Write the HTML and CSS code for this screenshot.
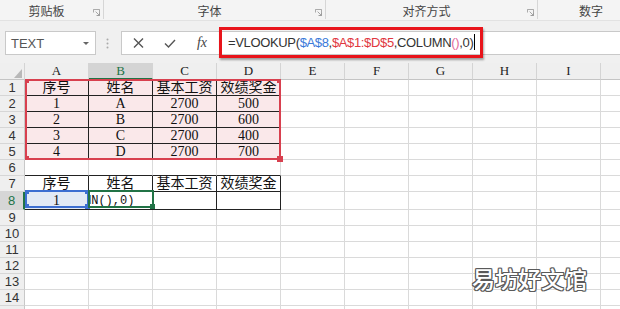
FILE: index.html
```html
<!DOCTYPE html>
<html lang="zh-CN">
<head>
  <meta charset="UTF-8">
  <title>VLOOKUP 与 COLUMN</title>
  <link rel="stylesheet" href="styles.css">
</head>
<body>

  <!-- 功能区分组标题 -->
  <div class="ribbon">
    <div class="grupo g1">
      <span class="rotulo">剪贴板</span>
      <svg class="lanc" viewBox="0 0 8 8"><path d="M0.5 4V0.5H7.5V7.5H4" /><path d="M3 3L7 7M7.5 4.5V7.5H4.5" /></svg>
    </div>
    <div class="grupo g2">
      <span class="rotulo">字体</span>
      <svg class="lanc" viewBox="0 0 8 8"><path d="M0.5 4V0.5H7.5V7.5H4" /><path d="M3 3L7 7M7.5 4.5V7.5H4.5" /></svg>
    </div>
    <div class="grupo g3">
      <span class="rotulo">对齐方式</span>
      <svg class="lanc" viewBox="0 0 8 8"><path d="M0.5 4V0.5H7.5V7.5H4" /><path d="M3 3L7 7M7.5 4.5V7.5H4.5" /></svg>
    </div>
    <div class="grupo g4">
      <span class="rotulo">数字</span>
    </div>
  </div>

  <!-- 编辑栏：名称框 + 公式 -->
  <div class="barra">
    <div class="nome">
      <span>TEXT</span>
      <span class="seta"></span>
    </div>
    <svg class="pontos" viewBox="0 0 3 11"><circle cx="1.5" cy="1.5" r="1" /><circle cx="1.5" cy="5.5" r="1" /><circle cx="1.5" cy="9.5" r="1" /></svg>
    <div class="campo">
      <span class="btn">
        <svg width="11" height="10" viewBox="0 0 11 10"><path d="M1 0.5L10 9.5M10 0.5L1 9.5" /></svg>
      </span>
      <span class="btn">
        <svg width="12" height="9" viewBox="0 0 12 9"><path d="M1 4.5L4.5 8L11 1" /></svg>
      </span>
      <span class="btn fx">fx</span>
      <div class="formula">
        <span>=VLOOKUP(</span><span class="azul">$A$8</span><span>,</span><span class="vermelho">$A$1:$D$5</span><span>,COLUMN</span><span class="rosa-txt">()</span><span>,0)</span><span class="cursor"></span>
      </div>
    </div>
  </div>

  <!-- 工作表 -->
  <div class="planilha">
    <table class="grade">
      <colgroup>
        <col class="c-num">
        <col><col><col><col><col><col><col><col><col><col>
      </colgroup>
      <tr class="cab">
        <th class="canto"><svg width="8" height="9" viewBox="0 0 8 9"><polygon points="8,0 8,9 0,9" /></svg></th>
        <th>A</th><th class="sel-col">B</th><th>C</th><th>D</th><th>E</th><th>F</th><th>G</th><th>H</th><th>I</th><th></th>
      </tr>
      <tr>
        <th>1</th>
        <td class="rosa pr pb">序号</td><td class="rosa pr pb">姓名</td><td class="rosa pr pb">基本工资</td><td class="rosa pb">效绩奖金</td>
        <td></td><td></td><td></td><td></td><td></td><td></td>
      </tr>
      <tr>
        <th>2</th>
        <td class="rosa pr pb">1</td><td class="rosa pr pb">A</td><td class="rosa pr pb num">2700</td><td class="rosa pb num">500</td>
        <td></td><td></td><td></td><td></td><td></td><td></td>
      </tr>
      <tr>
        <th>3</th>
        <td class="rosa pr pb">2</td><td class="rosa pr pb">B</td><td class="rosa pr pb num">2700</td><td class="rosa pb num">600</td>
        <td></td><td></td><td></td><td></td><td></td><td></td>
      </tr>
      <tr>
        <th>4</th>
        <td class="rosa pr pb">3</td><td class="rosa pr pb">C</td><td class="rosa pr pb num">2700</td><td class="rosa pb num">400</td>
        <td></td><td></td><td></td><td></td><td></td><td></td>
      </tr>
      <tr>
        <th>5</th>
        <td class="rosa pr">4</td><td class="rosa pr">D</td><td class="rosa pr num">2700</td><td class="rosa num">700</td>
        <td></td><td></td><td></td><td></td><td></td><td></td>
      </tr>
      <tr>
        <th>6</th>
        <td class="pb"></td><td class="pb"></td><td class="pb"></td><td class="pb"></td>
        <td></td><td></td><td></td><td></td><td></td><td></td>
      </tr>
      <tr>
        <th>7</th>
        <td class="pr pb">序号</td><td class="pr pb">姓名</td><td class="pr pb">基本工资</td><td class="pr pb">效绩奖金</td>
        <td></td><td></td><td></td><td></td><td></td><td></td>
      </tr>
      <tr>
        <th class="sel-lin">8</th>
        <td class="pr pb azul-claro">1</td><td class="pr pb editando"><span>MN(),0)</span></td><td class="pr pb"></td><td class="pr pb"></td>
        <td></td><td></td><td></td><td></td><td></td><td></td>
      </tr>
      <tr><th>9</th><td></td><td></td><td></td><td></td><td></td><td></td><td></td><td></td><td></td><td></td></tr>
      <tr><th>10</th><td></td><td></td><td></td><td></td><td></td><td></td><td></td><td></td><td></td><td></td></tr>
      <tr><th>11</th><td></td><td></td><td></td><td></td><td></td><td></td><td></td><td></td><td></td><td></td></tr>
      <tr><th>12</th><td></td><td></td><td></td><td></td><td></td><td></td><td></td><td></td><td></td><td></td></tr>
      <tr><th>13</th><td></td><td></td><td></td><td></td><td></td><td></td><td></td><td></td><td></td><td></td></tr>
      <tr><th>14</th><td></td><td></td><td></td><td></td><td></td><td></td><td></td><td></td><td></td><td></td></tr>
      <tr><th>15</th><td></td><td></td><td></td><td></td><td></td><td></td><td></td><td></td><td></td><td></td></tr>
    </table>

    <!-- 公式引用的区域（覆盖在单元格上） -->
    <div class="ref-vermelha">
      <span class="ponto tl"></span><span class="ponto tr"></span><span class="ponto bl"></span><span class="ponto br grande"></span>
    </div>
    <div class="ref-azul">
      <span class="ponto tl"></span><span class="ponto tr"></span><span class="ponto bl"></span><span class="ponto br"></span>
    </div>
    <div class="ativa"><span class="ponto br"></span></div>

    <div class="marca">易坊好文馆</div>
  </div>

</body>
</html>
```

FILE: styles.css
```css
body {
  margin: 0;
  width: 620px;
  height: 309px;
  overflow: hidden;
  background: #fff;
  font-family: "Liberation Sans", "Noto Sans CJK SC", sans-serif;
}

/* 功能区分组标题 */
.ribbon {
  display: flex;
  height: 20px;
  background: #f4f4f4;
  border-bottom: 1px solid #e2e2e2;
  font-size: 12px;
  color: #444;
}

.grupo {
  display: flex;
  align-items: center;
  flex: none;
  height: 18px;
  padding-top: 1px;
  border-right: 1px solid #d6d6d6;
}

.grupo .rotulo {
  flex: 1;
  text-align: center;
}

.g1 { width: 103px; }
.g2 { width: 221px; }
.g3 { width: 211px; }
.g4 { width: 106px; border-right: none; }

.lanc {
  width: 7px;
  height: 7px;
  margin: 5px 3px 0 0;
  fill: none;
  stroke: #9a9a9a;
  stroke-width: 1;
}

/* 编辑栏 */
.barra {
  display: flex;
  align-items: center;
  height: 42px;
  background: #f0f0f0;
}

.nome {
  display: flex;
  align-items: center;
  justify-content: space-between;
  box-sizing: border-box;
  width: 91px;
  height: 24px;
  margin: 2px 0 0 5px;
  padding: 0 6px 0 5px;
  background: #fff;
  border: 1px solid #c9c9c9;
  font-size: 13px;
  color: #555;
}

.seta {
  width: 0;
  height: 0;
  border-left: 3px solid transparent;
  border-right: 3px solid transparent;
  border-top: 3px solid #666;
}

.pontos {
  width: 3px;
  height: 11px;
  margin: 2px 0 0 10px;
  fill: #aaa;
}

.campo {
  display: flex;
  align-items: center;
  flex: 1;
  box-sizing: border-box;
  height: 24px;
  margin: 2px -10px 0 12px;
  background: #fff;
  border: 1px solid #c9c9c9;
}

.btn {
  display: flex;
  align-items: center;
  justify-content: center;
  width: 32px;
  height: 22px;
}

.btn svg {
  fill: none;
  stroke: #555;
  stroke-width: 1.4;
}

.btn.fx {
  font-family: "Liberation Serif", serif;
  font-style: italic;
  font-size: 14px;
  color: #444;
}

/* 红框里的公式 */
.formula {
  display: flex;
  align-items: center;
  flex: none;
  box-sizing: border-box;
  width: 264px;
  height: 31px;
  margin: -2px 0 0 1px;
  padding-left: 6px;
  border: 3px solid #e8141b;
  box-shadow: 1px 2px 2px rgba(0, 0, 0, 0.35);
  font-size: 13px;
  letter-spacing: -0.35px;
  color: #333;
  white-space: nowrap;
}

.azul { color: #3b7ad9; }
.vermelho { color: #e0373e; }
.rosa-txt { color: #e36a9c; }

.cursor {
  display: inline-block;
  width: 1px;
  height: 16px;
  margin-left: 1px;
  background: #000;
}

/* 工作表 */
.planilha {
  position: relative;
}

.grade {
  table-layout: fixed;
  width: 665px;
  border-collapse: separate;
  border-spacing: 0;
}

.grade col { width: 64px; }
.grade col.c-num { width: 25px; }

.grade tr { height: 16px; }

.grade td,
.grade th {
  padding: 0;
  line-height: 15px;
  text-align: center;
  white-space: nowrap;
  overflow: hidden;
  border-right: 1px solid #dadada;
  border-bottom: 1px solid #dadada;
}

.grade td {
  font-family: "Liberation Serif", "Noto Sans CJK SC", serif;
  font-size: 14px;
  color: #111;
}

/* 行号 */
.grade th {
  background: #efefef;
  font-weight: normal;
  font-size: 13px;
  color: #333;
  border-right-color: #c8c8c8;
  border-bottom-color: #d6d6d6;
}

/* 列标 */
.cab { height: 17px; }

.cab th {
  line-height: 16px;
  font-family: "Liberation Serif", serif;
  font-size: 13px;
  color: #222;
  border-right-color: #d4d4d4;
  border-bottom-color: #c4c4c4;
}

.canto svg {
  display: block;
  margin: 4px 0 0 14px;
  fill: #b8b8b8;
}

.cab th.sel-col {
  line-height: 15px;
  background: #d4d4d4;
  color: #217346;
  border-bottom: 2px solid #217346;
}

.grade th.sel-lin {
  background: #d6d6d6;
  color: #217346;
  border-right: 2px solid #217346;
}

.rosa { background: #fae8ea; }
.pr { border-right-color: #222 !important; }
.pb { border-bottom-color: #222 !important; }
.num { font-family: "Liberation Sans", sans-serif; font-size: 13px; }

.azul-claro { background: #e3eaf5; }

.editando {
  text-align: left !important;
}

.editando span {
  margin-left: -5px;
  font-family: "Liberation Mono", monospace;
  font-size: 12px;
}

/* 引用框 */
.ref-vermelha,
.ref-azul,
.ativa {
  position: absolute;
  box-sizing: border-box;
}

.ref-vermelha {
  left: 25px;
  top: 16px;
  width: 256px;
  height: 81px;
  border: 2px solid #d8404f;
}

.ref-azul {
  left: 25px;
  top: 127px;
  width: 64px;
  height: 18px;
  border: 2px solid #3d6fd1;
}

.ativa {
  left: 88px;
  top: 127px;
  width: 66px;
  height: 18px;
  border: 2px solid #217346;
}

.ponto {
  position: absolute;
  width: 4px;
  height: 4px;
}

.ref-vermelha .ponto { background: #d8404f; }
.ref-azul .ponto { background: #3d6fd1; }
.ativa .ponto { background: #217346; }

.ponto.tl { left: -2px; top: -2px; }
.ponto.tr { right: -2px; top: -2px; }
.ponto.bl { left: -2px; bottom: -2px; }
.ponto.br { right: -3px; bottom: -3px; width: 5px; height: 5px; }
.ponto.grande { width: 6px; height: 6px; right: -4px; bottom: -4px; }

/* 水印 */
.marca {
  position: absolute;
  left: 472px;
  top: 198px;
  font-family: "Noto Sans CJK SC", sans-serif;
  font-size: 23px;
  font-weight: 500;
  color: #fff;
  text-shadow: 1px 0 #5a5a5a, -1px 0 #5a5a5a, 0 1px #5a5a5a, 0 -1px #5a5a5a,
    1px 1px #5a5a5a, -1px -1px #5a5a5a, 1px -1px #5a5a5a, -1px 1px #5a5a5a;
}
```
